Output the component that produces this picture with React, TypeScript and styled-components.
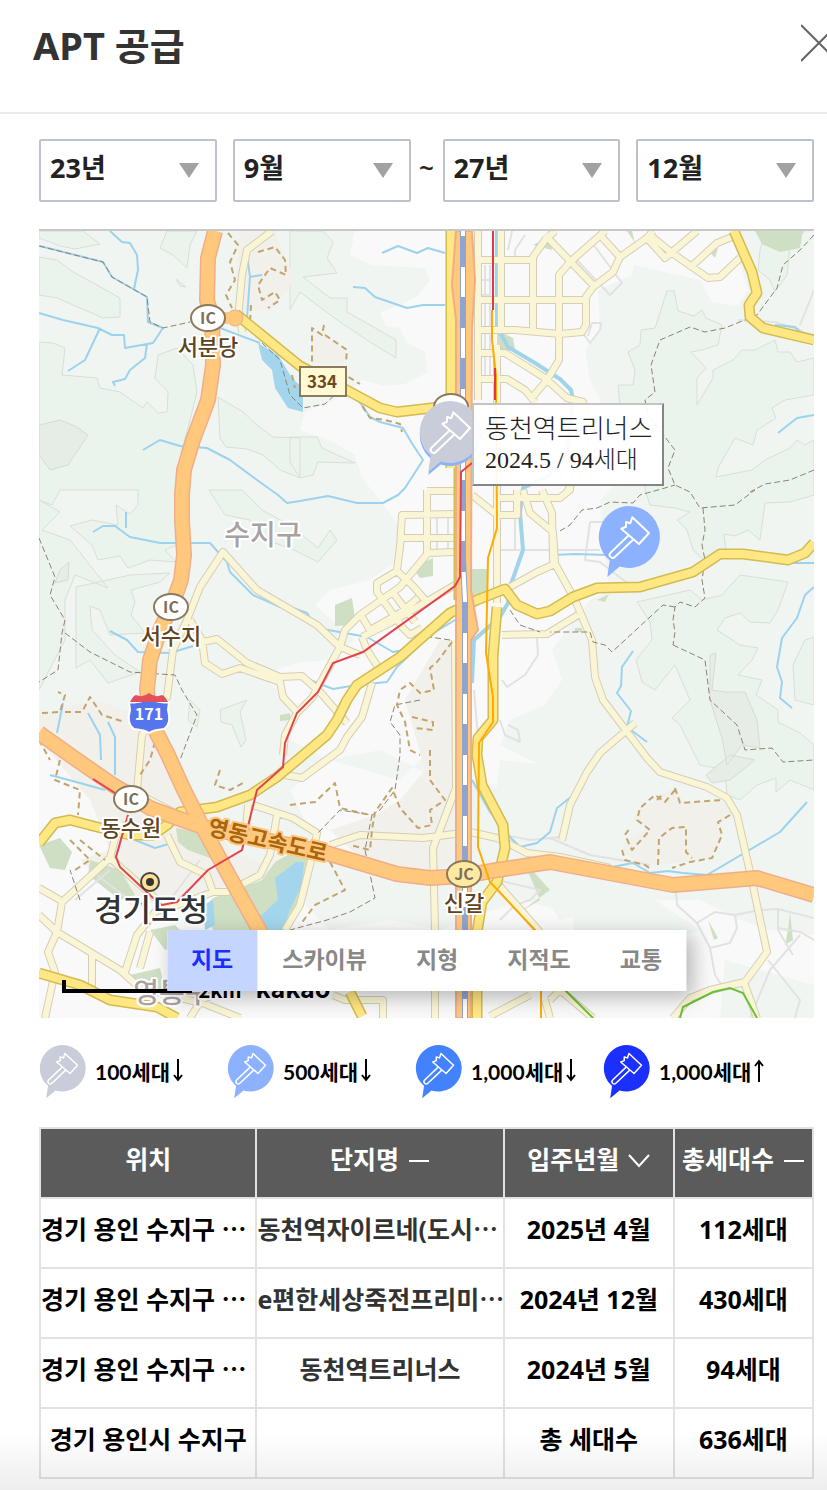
import React, { useState } from "react";
import styled, { createGlobalStyle, css } from "styled-components";

const GlobalStyle = createGlobalStyle`
  *, *::before, *::after { box-sizing: border-box; }
  body {
    margin: 0;
    background: #fff;
    color: #000;
    font-family: "Noto Sans", "Noto Sans CJK KR", sans-serif;
  }
  button, select { font: inherit; color: inherit; }
`;

const Page = styled.div`
  position: relative;
  padding-bottom: 13px;
  overflow: hidden;
`;

const BottomFade = styled.div`
  position: absolute;
  inset: auto 0 0 0;
  height: 60px;
  background: linear-gradient(rgba(0, 0, 0, 0), rgba(0, 0, 0, 0.07));
  pointer-events: none;
`;

const Header = styled.header`
  display: flex;
  align-items: flex-start;
  justify-content: space-between;
  height: 114px;
  padding: 18px 0 0 33px;
  border-bottom: 2px solid #ebebeb;
`;

const Title = styled.h1`
  margin: 0;
  font-size: 38px;
  line-height: 54px;
  font-weight: 700;
  color: #333;
`;

const CloseButton = styled.button`
  flex: none;
  width: 38px;
  height: 38px;
  margin: 6px -12px 0 0;
  padding: 0;
  border: 0;
  background: none;
  svg { display: block; }
`;

const Main = styled.main`
  padding: 25px 13px 0 39px;
`;

const Filters = styled.form`
  display: flex;
  align-items: center;
  margin-bottom: 27px;
`;

const Pair = styled.div`
  flex: 1;
  display: flex;
  gap: 16px;
`;

const Tilde = styled.span`
  width: 32px;
  padding-bottom: 8px;
  text-align: center;
  font-size: 26px;
  line-height: 36px;
  font-weight: 600;
  color: #222;
`;

const SelectBox = styled.label`
  flex: 1;
  position: relative;
  svg {
    position: absolute;
    right: 18px;
    top: 24px;
    pointer-events: none;
  }
`;

const Select = styled.select`
  appearance: none;
  display: block;
  width: 100%;
  height: 63px;
  padding: 0 0 6px 9px;
  border: 2px solid #bdc1cd;
  border-radius: 2px;
  background: #fff;
  font-size: 27px;
  font-weight: 700;
  color: #222;
`;

const MapFrame = styled.section`
  position: relative;
  border-top: 2px solid #c8c8c8;
  > svg { display: block; width: 100%; height: auto; }
`;

const Marker = styled.button`
  position: absolute;
  padding: 0;
  border: 0;
  background: none;
  svg { display: block; }
`;

const Tooltip = styled.div`
  position: absolute;
  padding: 9px 10px 8px 11px;
  border: 2px solid;
  border-color: #c4c4c4 #858585 #858585 #c4c4c4;
  background: rgba(255, 255, 255, 0.93);
  font-family: "Liberation Serif", "Noto Sans CJK KR", serif;
  font-size: 26px;
  line-height: 31px;
  font-weight: 300;
  color: #222;
  white-space: nowrap;
`;

const TooltipDetail = styled.div`
  font-size: 24px;
`;

const LayerTabs = styled.nav`
  position: absolute;
  left: 50%;
  bottom: 27px;
  display: flex;
  transform: translateX(-50%);
  background: #fff;
  box-shadow: 6px 6px 20px rgba(0, 0, 0, 0.28);
`;

const LayerTab = styled.button<{ $active: boolean }>`
  height: 61px;
  padding: 0 24px 6px 25px;
  border: 0;
  background: none;
  font-size: 23px;
  font-weight: 700;
  color: #888;
  white-space: nowrap;
  ${(p) => p.$active && css`
    padding: 0 24px 6px;
    background: #c4d6ff;
    color: #1b2eff;
  `}
`;

const Legend = styled.ul`
  display: grid;
  grid-template-columns: repeat(4, minmax(0, 1fr));
  margin: 27px 0 28px;
  padding: 0 23px 0 0;
  list-style: none;
`;

const LegendItem = styled.li`
  display: flex;
  align-items: center;
  gap: 9px;
  font-family: Lato, "Noto Sans CJK KR", sans-serif;
  font-size: 21px;
  line-height: 32px;
  font-weight: 700;
  white-space: nowrap;
  svg { flex: none; }
`;

const LegendText = styled.span`
  display: flex;
  align-items: center;
  gap: 2px;
`;

const Table = styled.table`
  width: 100%;
  table-layout: fixed;
  border-collapse: collapse;
  font-size: 25px;
  line-height: 36px;
  font-weight: 700;
  text-align: center;
`;

const Col = styled.col<{ $share: number }>`
  width: ${(p) => p.$share}%;
`;

const HeadCell = styled.th`
  height: 70px;
  padding: 0 0 8px;
  border: 2px solid #e2e2e2;
  background: #5b5b5b;
  color: #fff;
  white-space: nowrap;
`;

const SortButton = styled.button`
  display: inline-flex;
  align-items: center;
  gap: 9px;
  padding: 0;
  border: 0;
  background: none;
  svg { margin-top: 4px; }
`;

const Cell = styled.td<{ $long?: boolean; $soft?: boolean }>`
  height: 70px;
  padding: 0 0 8px;
  border: 2px solid #e2e2e2;
  overflow: hidden;
  white-space: nowrap;
  text-align: ${(p) => (p.$long ? "left" : "center")};
  ${(p) => p.$soft && css`
    color: #333;
  `}
`;

/* ---------- icons ---------- */

const PIN_GREY = "#c9cdd9";
const PIN_SKY = "#8cb1ff";
const PIN_BLUE = "#4382ff";
const PIN_NAVY = "#1b30ff";

const HammerPin = ({ color, width = 64, height = 72, shadow }: { color: string; width?: number; height?: number; shadow?: string }) => {
  const body = "M31 0a31 31 0 1 1-9.300 60.600L9.300 71l2.400-16.400A31 31 0 0 1 31 0z";
  return (
    <svg width={width} height={height} viewBox="0 0 62 72" aria-hidden="true" overflow="visible">
      {shadow && <path d={body} fill={shadow} transform="translate(0 3)" />}
      <path d={body} fill={color} />
      <g fill="none" stroke="#fff" strokeWidth="2" strokeLinejoin="round">
        <path d="M34.300 11.300 51 27 41 38 23.300 22.700 28 20.800 28 16 32.300 17.200z" />
        <path d="M30.500 29.500 12.600 46.600a3 3 0 0 0 4.200 4.400L35.300 33.500" />
      </g>
    </svg>
  );
};

const CloseIcon = () => (
  <svg width="38" height="38" viewBox="0 0 38 38" aria-hidden="true">
    <path d="M0 1 36 37M36 1 0 37" stroke="#666" strokeWidth="2" />
  </svg>
);

const Caret = () => (
  <svg width="20" height="15" viewBox="0 0 20 15" aria-hidden="true">
    <path d="M0 0h20L10 15z" fill="#a2a2a2" />
  </svg>
);

const ArrowIcon = ({ up }: { up?: boolean }) => (
  <svg width="12" height="26" viewBox="0 0 12 26" aria-hidden="true">
    <path d={up ? "M6 23V2M2 7l4-5 4 5" : "M6 0v21M2 16l4 5 4-5"} fill="none" stroke="#000" strokeWidth="2" />
  </svg>
);

const DashIcon = () => (
  <svg width="22" height="12" viewBox="0 0 22 12" aria-hidden="true">
    <path d="M1 6h20" stroke="#fff" strokeWidth="2" />
  </svg>
);

const ChevronIcon = () => (
  <svg width="22" height="14" viewBox="0 0 22 14" aria-hidden="true">
    <path d="M1 1l10 11L21 1" fill="none" stroke="#fff" strokeWidth="2" />
  </svg>
);

/* ---------- map artwork (viewBox 39 231 775 787) ---------- */

const urban = [
  "M355 231 350 255 372 265 425 268 430 280 418 296 398 306 380 312 386 326 400 328 406 342 425 352 428 372 405 384 385 386 362 380 345 395 330 402 305 412 300 430 330 440 355 455 362 478 380 500 402 530 398 560 370 580 330 590 315 605 355 640 330 660 300 662 260 675 300 710 290 740 330 760 400 780 440 740 470 780 505 790 520 840 560 850 570 800 550 770 530 760 500 745 510 720 545 705 562 680 552 650 590 600 610 590 602 540 600 500 620 480 590 470 600 400 590 380 585 350 600 330 598 290 632 275 634 265 700 280 712 302 738 306 748 290 730 231z",
  "M39 735 39 1018 814 1018 814 935 770 930 740 920 700 900 600 900 560 910 520 900 440 930 390 920 330 930 300 900 230 880 200 820 150 780 100 760z",
  "M290 790 330 760 380 750 420 770 450 800 440 880 400 868 320 850z",
];

const hills = [
  "M39 231 83 231 100 244 75 249 60 246 39 238z",
  "M39 257 57 260 73 272 97 285 120 298 120 317 103 318 57 298 39 295z",
  "M160 248 167 231 197 231 190 245 187 268 173 255z",
  "M176 279 186 287 180 286z",
  "M39 342 53 343 65 348 62 375 97 378 100 388 120 392 143 408 147 402 158 413 167 412 168 392 155 378 158 355 177 348 193 365 197 392 190 420 182 450 180 500 176 545 165 550 176 562 150 560 128 568 120 556 98 560 92 545 70 526 92 520 118 525 116 505 130 514 138 505 138 490 60 490 52 505 39 500z",
  "M218 397 243 412 257 425 273 437 300 438 300 478 280 470 263 455 247 449 226 447 220 438z",
  "M290 231 323 231 333 242 327 258 337 273 303 277 330 298 347 298 347 312 370 325 396 340 396 358 370 342 340 322 317 305 300 292 290 310z",
  "M290 437 317 437 322 448 355 463 318 462 313 475 300 478 290 462z",
  "M209 490 242 490 262 510 290 525 318 548 330 530 337 540 318 562 290 548 265 540 250 520 225 515z",
  "M39 500 60 512 42 530 70 540 108 588 75 575 65 600 65 640 39 690z",
  "M76 587 130 575 170 573 160 582 131 590 135 602 131 615 145 633 110 635 100 610 90 606 92 630 115 655 140 672 108 683 90 660 76 668z",
  "M190 700 200 710 197 727 188 720z M220 710 247 700 240 712 246 740 241 747 232 725 221 722z",
  "M667 291 674 291 678 311 694 316 702 310 706 318 722 325 718 345 702 350 691 352 706 368 697 378 697 405 713 378 713 370 733 360 742 350 755 350 775 340 778 352 790 352 797 362 814 358 814 395 785 400 772 408 776 418 757 430 753 445 735 438 718 468 716 477 752 470 765 460 790 448 797 440 805 445 814 440 814 495 790 502 765 503 762 525 760 540 748 530 735 536 724 534 726 552 706 562 693 550 687 530 677 520 690 512 675 508 650 505 645 490 645 460 630 430 620 405 618 385 633 385 635 370 628 352 640 345 641 330 655 328z",
  "M637 602 690 590 702 600 722 595 740 575 788 582 778 610 770 623 750 622 740 613 725 618 717 630 740 645 758 648 752 660 738 675 762 680 756 695 778 710 778 722 800 733 814 745 814 790 790 780 776 792 776 778 757 785 740 800 727 795 725 770 700 765 680 725 672 718 690 700 675 665 655 690 642 682 636 660 652 640 650 622z",
  "M760 250 765 231 805 231 790 245 787 275 775 292 770 280 758 270z",
  "M793 665 805 640 814 637 814 705 795 700z",
];

const darkHills = [
  "M39 425 60 420 75 426 88 435 68 465 50 470 39 455z",
  "M60 570 69 562 68 580 55 583z",
  "M710 655 716 653 712 690 725 692 745 692 757 720 760 748 742 745 727 765 722 738 710 700z",
  "M706 775 730 755 755 760 730 780 712 783z",
];

const tanAreas = [
  "M240 231 275 231 295 280 270 310 245 310 236 280z",
  "M312 330 325 332 345 352 347 362 325 365 312 362z",
  "M39 715 70 706 95 700 130 712 160 740 200 800 230 850 300 880 250 880 180 900 130 905 80 860 110 850 90 800 39 740z",
  "M455 640 455 860 430 875 400 868 360 858 330 830 375 815 400 800 425 770 405 700 440 640z",
  "M675 788 685 803 720 800 735 815 718 825 722 840 712 858 690 862 640 865 622 850 628 838 650 828 633 820 640 808 655 802 660 795z",
];

const greens = [
  "M213 898 262 880 275 862 300 848 312 858 302 900 286 932 215 932 200 912z",
  "M176 828 215 835 215 860 188 850 178 842z",
  "M90 860 120 870 135 895 120 900 88 875z M39 845 60 838 72 852 65 870 50 868z",
  "M150 930 175 925 190 940 165 950z M130 975 160 968 165 990 140 992z",
  "M472 569 487 569 487 600 472 600z",
  "M412 568 433 558 433 576 420 578z M335 605 352 598 356 625 335 626z",
  "M497 330 513 338 515 350 497 352z",
  "M755 231 803 231 800 248 780 252 762 244z",
  "M533 245 550 236 552 250z M627 231 635 243 632 231z M708 250 718 248 715 258z",
  "M523 860 550 890 520 912 540 900z M708 920 718 938 714 940z M790 913 793 940 785 945 788 930z",
  "M597 600 609 594 605 602z M575 628 582 628 582 632 575 632z M280 715 290 713 290 720 280 721z",
];

const lakes = [
  "M258 343 278 355 292 378 303 388 303 412 288 408 275 388 272 370 262 360z",
  "M275 878 296 862 304 862 302 885 290 910 282 932 262 932 258 918 278 900z",
  "M203 905 213 900 215 925 205 930z",
];

const streams = [
  "M110 231 122 242 130 243 137 255 138 270 134 289",
  "M40 246 103 262 112 277 147 297 148 322 163 328 153 343 125 348 124 335 112 335 98 328 63 320 39 313",
  "M100 328 85 360 68 371",
  "M147 344 145 358 130 370 125 379 113 382 115 386",
  "M143 450 160 440 180 446 207 448 230 460 257 480 278 495 287 503 300 501 328 496 357 503 383 503 398 495 405 488 423 460 413 445 403 428 380 422 370 417 357 398",
  "M247 255 250 277 247 318 M250 277 262 275",
  "M220 328 260 343",
  "M382 253 398 246 417 253 428 248 445 253 M353 287 365 288 375 297 407 308 423 305 445 305",
  "M293 608 307 613 317 628 367 637 393 652 415 648 427 637 455 620",
  "M310 680 333 689 357 685 387 682 397 667 420 645",
  "M93 532 103 526 115 526 130 537 160 543 210 543 227 562 230 572 253 595 280 607 M126 512 126 528",
  "M110 631 127 640 138 652 170 653 193 646",
  "M63 703 57 733 M88 713 100 735 101 760 M108 722 115 737 115 775 M50 775 80 783 105 790",
  "M633 651 622 667 621 686 617 693 631 711 627 727 647 742",
  "M814 587 805 595 797 618 782 638 777 667 782 682 780 698 792 708",
  "M553 555 575 554 607 555 M792 563 814 563",
  "M612 867 633 863 650 873 668 871 683 873 707 875 780 832 807 802",
  "M600 755 592 770 571 797 557 808 550 832 537 843 520 847 510 837 490 812 472 780",
  "M814 415 797 418 778 433 M775 325 795 327 806 338",
  "M135 840 155 848 172 843 M180 862 205 873",
];

const canals = [
  "M497 231V327L508 347 535 363 560 379 571 390 573 400 567 452 550 475 523 488 520 513 523 550 510 587 508 603 500 617 474 640 472 683",
];

const greyRoads = [
  "M512 231 508 250 M525 235 515 250 515 262 M485 265V375 M490 265V375 M480 280H490 M480 295H490",
  "M437 515V552 M448 515V552 M515 495V550 M500 550H600 M590 522H608 M590 522 585 560 600 562 630 585",
  "M738 320 775 322 800 330 814 340 M800 325 814 290",
  "M502 680 507 687 525 675 538 655 537 638 M474 690 480 760 M500 720 505 735 520 742 518 730 508 725",
  "M676 890 677 905 697 923 710 948 715 975 725 990 M697 923 715 912 735 915 737 928 730 943 710 948 M735 915 760 910 778 909 814 918 M778 909V930L793 955 M778 928 800 932 814 940 M768 960 800 1000 795 1018 M800 935 770 970 750 1018",
  "M550 838 590 855 620 860 650 865 M505 835 530 840 560 837 M497 880 540 890 530 900 515 905 500 920",
  "M90 870 130 900 M170 900 200 860 M75 900 110 870",
  "M575 258 610 295 622 283 590 240 M582 332 590 343 600 330 601 323 592 323 588 336",
];

const minorRoads = [
  "M272 231 247 250 242 275 239 308 242 332",
  "M137 790 142 735 167 697 173 650 187 620 200 587 223 552 257 590 317 625 340 647 360 655",
  "M190 620 202 640 205 663 222 674 240 668 280 682 283 697 297 712",
  "M203 642 217 639 247 663 280 677 302 676 320 692 347 723",
  "M283 755 285 735 297 713 312 698 340 647 345 630 360 615 400 587 428 553 455 552",
  "M397 570 400 547 402 515 455 514 M402 538H455 M427 490V555 M427 491H455",
  "M397 571 377 583 377 592 403 628 410 635 422 628 M397 571 412 585 427 602",
  "M362 617 370 630 400 613 418 598 M391 590 415 622 M362 637 390 623 455 585 M362 637 367 650 378 667",
  "M372 683 362 717 347 737 340 750 302 778 285 775",
  "M497 345V603 M478 231V400 M501 231V330 M475 260H533 M475 300H585 M475 330H515L560 334 582 332 586 325 586 297 593 287 613 272 620 257 647 238 653 231",
  "M475 353H505L545 378 567 398 583 402 593 445 567 492 560 498H498 M475 379H507L525 390 535 402",
  "M533 330V257L545 240 555 231 M559 300V275L570 262 605 231 M559 300V360L547 380 530 400",
  "M545 235 593 285 M600 235 620 257 M647 238 665 258 697 231 M650 235 672 253 708 278 720 277 740 258 M693 265 717 243 732 237",
  "M472 495 497 515 517 515V490 M523 490 530 513 553 532 555 562 M542 490 552 513 553 560 575 600 592 640 595 677 603 700 647 758 660 772 707 787 727 798 737 815 750 872 767 952 745 982 710 990 690 998 673 1018",
  "M745 985 757 1018 M635 723 600 753 587 772 570 805 562 840",
  "M510 587 537 572 557 563 M502 635 547 634 578 615 M570 480 570 490 560 498",
  "M110 858 62 902 57 932 48 952 55 972 45 1018 M39 888 60 900 M39 915 57 932 120 970 140 988 197 1002 235 985",
  "M110 858 155 898 M110 858 120 820 M125 972 137 935 155 912 187 902 213 892 227 892 260 875 270 855 277 815 M150 932 140 968 M92 955V988",
  "M167 835 180 862 207 875 213 892 M253 805 293 818 317 833 310 865 300 905 285 930 M102 775 173 812 M248 805 246 830",
  "M330 845 360 835 423 838 470 832 497 838 527 853 560 857 610 868 M455 640 456 788 433 848 435 928 435 1018",
  "M190 1018 200 1002 240 1018 M333 995 345 1000 383 1000V1018 M490 1016 530 995 M550 1000 560 990 593 1018 M550 1018 545 1000",
  "M497 883 540 932",
];

const majorRoads = [
  "M236 314 300 366 343 388 380 408 397 412 440 407",
  "M451 231V468",
  "M39 843 55 823 70 820 97 827 130 835 153 835 167 825 180 812 217 807 250 795 277 777 327 735 337 720 347 700 357 685 400 657 450 613 477 600 505 589 517 605 537 614 550 611 573 597 597 588 640 587 693 572 720 554 743 554 788 560 805 553 814 543",
  "M734 231 752 272 757 293 749 305 750 317 763 328 814 340",
  "M497 607 493 657 493 720 478 738 477 755 482 785 503 825 505 848 497 882 482 902 477 932V1018",
  "M39 973 80 985 110 1000 157 1007 177 1018 M350 992 362 1016",
];

const highways = [
  "M215 231 208 258 207 300 212 318 213 365 208 400 193 440 184 470 182 495 182 520 184 555 181 580 172 605 160 630 150 660 147 690 150 720 168 755 183 788 203 828 227 872 262 935",
  "M39 733 77 760 113 785 150 808 177 818 203 827 323 852 397 874 430 878 463 876 497 870 550 862 673 885 757 878 814 895",
];

const boundaries = [
  "M39 246 103 262 112 277 147 297 150 322 163 328 190 322",
  "M262 343 280 360 290 395 303 408 325 404 340 390",
  "M39 538 55 577 50 595 65 620 62 633 58 670 39 682 M65 633 90 652 130 672 175 675 182 690 197 715 180 760",
  "M814 235 800 250 783 265 777 288 757 315 725 328 705 332 690 327 660 340 651 365 655 392 645 400 648 415 675 450 668 468 675 485 690 492 700 508 735 505 755 490 M814 470 790 480 765 484 750 492",
  "M560 531 570 525 582 510 597 508 610 502 633 503 640 495 665 488 675 485",
  "M703 508 705 530 702 545 705 560 702 580 705 598 695 607 680 602 675 607 673 620 675 632 673 645 M673 645 705 660 710 700 737 725 745 750 772 748 783 762 814 760",
  "M675 607 663 605 612 652 605 645 593 642 590 632 550 632 M510 610 520 625 540 632",
  "M450 640 430 637 M420 700 395 705 390 722 400 735 400 755 395 790 380 810 372 815 340 810 318 833",
  "M372 815 365 850 375 898 350 912 327 920 290 930 M150 925 140 900 M80 900 70 870",
];

const tanDashes = [
  "M228 233 238 245 230 262 235 280 226 295 232 308 M258 252 275 247 285 260 286 275 270 268 258 285 262 300 275 292 280 300 268 308 M251 305 250 322",
  "M324 325 322 335 312 328 312 362 M325 335 347 350 346 362 M340 372 360 384",
  "M357 398 370 418 385 420 400 424 402 432",
  "M292 375 295 388",
  "M42 713 60 712 65 695 58 692 M65 712 82 712 90 697 102 715 125 722 M39 740 50 760 M155 742 150 760 140 775",
  "M452 642 437 662 430 668 434 690 420 693 410 683 400 690 397 705 405 722 410 750 420 755 M412 717 433 722 433 730 415 728 M430 750 430 780 445 800 430 810 432 825 418 828 400 808 392 788 375 812 372 830 370 850 350 845",
  "M675 788 680 803 722 800 M675 790 665 802 655 795 640 808 637 820 650 830 632 850 625 835 630 828 M657 800 662 795 M730 815 718 822 722 835 712 858 690 862 672 868 M658 865 659 838 672 828 686 827 686 852 692 858 M622 850 625 860 645 865 652 870",
  "M290 805 315 802 335 783 340 808 370 815 M330 862 345 890 315 905 300 925",
  "M60 760 55 780 80 790 78 815 M220 770 215 785 230 790 245 782 M70 840 90 860 75 870 M80 840 105 860",
];

const ringLabels = [
  { x: 208, y: 318, code: "IC", name: "서분당", fill: "#fff" },
  { x: 171, y: 607, code: "IC", name: "서수지", fill: "#fff" },
  { x: 131, y: 799, code: "IC", name: "동수원", fill: "#fff" },
  { x: 464, y: 874, code: "JC", name: "신갈", fill: "#ffe9a0" },
];

const MapText = styled.text<{ $size: number; $color: string; $halo?: string; $bold?: boolean }>`
  font-family: "Noto Sans CJK KR", sans-serif;
  font-size: ${(p) => p.$size}px;
  font-weight: ${(p) => (p.$bold ? 700 : 500)};
  fill: ${(p) => p.$color};
  stroke: ${(p) => p.$halo ?? "#fff"};
  stroke-width: ${(p) => (p.$halo === "none" ? 0 : 4)}px;
  stroke-linejoin: round;
  paint-order: stroke;
  text-anchor: middle;
`;

const Strokes = ({ paths, color, width, dash }: { paths: string[]; color: string; width: number; dash?: string }) => (
  <path d={paths.join(" ")} fill="none" stroke={color} strokeWidth={width} strokeDasharray={dash} strokeLinejoin="round" />
);

const Fills = ({ paths, color, outline }: { paths: string[]; color: string; outline?: string }) => (
  <path d={paths.join(" ")} fill={color} stroke={outline} />
);

const MapArtwork = () => (
  <svg viewBox="39 231 775 787" role="img" aria-label="경기 용인 수지구 지도">
    <rect x="39" y="231" width="775" height="787" fill="#f0f5f2" />
    <Fills paths={urban} color="#f9f9f9" />
    <path d="M500 760 600 770 640 900 560 920 510 850 495 800z M570 900 640 890 700 930 640 950 575 935z M725 960 814 985 814 1018 720 1018z" fill="#f0f5f2" />
    <Fills paths={hills} color="#ebf3ed" outline="#d8dfd6" />
    <Fills paths={darkHills} color="#e6ede6" outline="#d5dcd3" />
    <Fills paths={tanAreas} color="#f1f0ea" />
    <Fills paths={greens} color="#cfdfc3" />
    <Fills paths={lakes} color="#a3d6ec" />
    <Strokes paths={greyRoads} color="#e2e2e2" width={2} />
    <Strokes paths={streams} color="#9bd3ef" width={2} />
    <Strokes paths={canals} color="#a0d4ea" width={4} />
    <Strokes paths={minorRoads} color="#d4ceb8" width={8} />
    <Strokes paths={minorRoads} color="#faf6d5" width={6} />
    <Strokes paths={boundaries} color="#8f826f" width={1} dash="6 3" />
    <Strokes paths={tanDashes} color="#c3a46c" width={2} dash="6 4" />
    <Strokes paths={majorRoads} color="#d2bb52" width={11} />
    <Strokes paths={majorRoads} color="#ffe783" width={8} />
    <path d="M455 468V600" stroke="#d2bb52" strokeWidth="3" />
    <Strokes paths={highways} color="#f0ae88" width={16} />
    <Strokes paths={highways} color="#ffc87c" width={13} />
    <circle cx="235" cy="318" r="8" fill="#ffc87c" stroke="#f0ae88" />
    <path d="M220 318h16" stroke="#ffc87c" strokeWidth="12" />
    <path d="M456 231 452 285 456 320V1018H471V640L478 630 471 590 472 330 475 280 472 231z" fill="#ffc87c" stroke="#f0ae88" strokeWidth="2" />
    <path d="M463 231V560L465 600V1018" fill="none" stroke="#8fa5cf" strokeWidth="6" />
    <path d="M463 206V560L465 600V1018" fill="none" stroke="#fff" strokeWidth="4" strokeDasharray="30 31" />
    <path d="M492 310V340L496 375 497 528 488 558 486 653 493 697 493 722 479 743 478 847 490 882 535 930 541 992V1018" fill="none" stroke="#ffab00" strokeWidth="2" />
    <path d="M493 231V310M495 368V400" stroke="#e23744" strokeWidth="2" />
    <path d="M472 463 461 472 460 577 455 586 363 652 333 663 318 692 297 713 285 743 283 767 257 790 242 850 208 870 177 902 162 905 152 897 120 867 116 857 128 815M93 779 115 793" fill="none" stroke="#e2434f" strokeWidth="2" />
    <path d="M757 1018 743 993 730 988 713 992 683 1007 680 1018M555 990H565L593 1018" fill="none" stroke="#6cc03a" strokeWidth="2" />

    <ellipse cx="451" cy="407" rx="17" ry="13" fill="#fff" stroke="#8c7a5c" strokeWidth="2" />
    {ringLabels.map((l) => (
      <g key={l.name}>
        <ellipse cx={l.x} cy={l.y} rx="17" ry="13" fill={l.fill} stroke="#8c7a5c" strokeWidth="2" />
        <MapText x={l.x} y={l.y + 6} $size={16} $color="#7d7058" $halo="none" $bold>{l.code}</MapText>
        <MapText x={l.x} y={l.y + 37} $size={22} $color="#5e4423">{l.name}</MapText>
      </g>
    ))}

    <rect x="300" y="367" width="46" height="29" fill="#fff9d4" stroke="#8c7a5c" strokeWidth="2" />
    <MapText x="322" y="388" $size={17} $color="#6b4a22" $halo="none" $bold>334</MapText>

    <path d="M129 702q10 2 20-4 10 6 20 4l-1 8q4 14-4 19-11 1-15 4-4-3-15-4-8-5-4-19z" fill="#5575ee" stroke="#fff" strokeWidth="2" />
    <path d="M130 702q3-6 6-7 7 3 13-2 6 5 13 2 3 1 6 7z" fill="#e2505c" />
    <MapText x="149" y="720" $size={16} $color="#fff" $halo="none" $bold>171</MapText>

    <MapText x="263" y="545" $size={28} $color="#aaa2a2">수지구</MapText>
    <MapText x="172" y="1003" $size={28} $color="#aaa2a2">영통구</MapText>
    <MapText x="0" y="0" transform="translate(266 848) rotate(13)" $size={22} $color="#a9650f" $halo="#ffc87c" $bold>영동고속도로</MapText>
    <circle cx="150" cy="882" r="9" fill="#ffdf93" stroke="#444" strokeWidth="2" />
    <circle cx="150" cy="882" r="4" fill="#333" />
    <MapText x="151" y="921" $size={31} $color="#333">경기도청</MapText>

    <path d="M64 980V991H192" fill="none" stroke="#000" strokeWidth="4" />
    <MapText x="220" y="998" $size={20} $color="#000" $bold>2km</MapText>
    <MapText x="293" y="998" $size={25} $color="#000" $bold>kakao</MapText>
  </svg>
);

/* position of an overlay on the map, in the artwork's units */
const at = (x: number, y: number) => ({ left: `${(x / 775) * 100}%`, top: `${(y / 787) * 100}%` });

const layers = ["지도", "스카이뷰", "지형", "지적도", "교통"];

const legend = [
  { color: PIN_GREY, label: "100세대", up: false },
  { color: PIN_SKY, label: "500세대", up: false },
  { color: PIN_BLUE, label: "1,000세대", up: false },
  { color: PIN_NAVY, label: "1,000세대", up: true },
];

const rows = [
  { place: "경기 용인 수지구 ⋯", name: "동천역자이르네(도시⋯", date: "2025년 4월", count: "112세대" },
  { place: "경기 용인 수지구 ⋯", name: "e편한세상죽전프리미⋯", date: "2024년 12월", count: "430세대" },
  { place: "경기 용인 수지구 ⋯", name: "동천역트리너스", date: "2024년 5월", count: "94세대" },
];

const years = ["23년", "24년", "25년", "26년", "27년"];
const months = Array.from({ length: 12 }, (_, i) => `${i + 1}월`);

const Dropdown = ({ name, options, initial }: { name: string; options: string[]; initial: string }) => (
  <SelectBox>
    <Select aria-label={name} defaultValue={initial}>
      {options.map((o) => (
        <option key={o}>{o}</option>
      ))}
    </Select>
    <Caret />
  </SelectBox>
);

export default function App() {
  const [layer, setLayer] = useState("지도");

  return (
    <>
      <GlobalStyle />
      <Page>
        <Header>
          <Title>APT 공급</Title>
          <CloseButton type="button" aria-label="닫기">
            <CloseIcon />
          </CloseButton>
        </Header>
        <Main>
          <Filters>
            <Pair>
              <Dropdown name="시작 연도" options={years} initial="23년" />
              <Dropdown name="시작 월" options={months} initial="9월" />
            </Pair>
            <Tilde>~</Tilde>
            <Pair>
              <Dropdown name="종료 연도" options={years} initial="27년" />
              <Dropdown name="종료 월" options={months} initial="12월" />
            </Pair>
          </Filters>

          <MapFrame>
            <MapArtwork />
            <Marker type="button" aria-label="동천역트리너스" style={at(379, 170)}>
              <HammerPin color={PIN_GREY} shadow={PIN_SKY} />
            </Marker>
            <Marker type="button" aria-label="동천역자이르네" style={at(558, 275)}>
              <HammerPin color={PIN_SKY} />
            </Marker>
            <Tooltip style={at(433, 172)}>
              동천역트리너스
              <TooltipDetail>2024.5 / 94세대</TooltipDetail>
            </Tooltip>
            <LayerTabs>
              {layers.map((l) => (
                <LayerTab key={l} type="button" $active={l === layer} onClick={() => setLayer(l)}>
                  {l}
                </LayerTab>
              ))}
            </LayerTabs>
          </MapFrame>

          <Legend>
            {legend.map((item) => (
              <LegendItem key={item.color}>
                <HammerPin color={item.color} width={47} height={54} />
                <LegendText>
                  {item.label}
                  <ArrowIcon up={item.up} />
                </LegendText>
              </LegendItem>
            ))}
          </Legend>

          <Table>
            <colgroup>
              <Col $share={28} />
              <Col $share={32} />
              <Col $share={22} />
              <Col $share={18} />
            </colgroup>
            <thead>
              <tr>
                <HeadCell scope="col">위치</HeadCell>
                <HeadCell scope="col"><SortButton type="button">단지명 <DashIcon /></SortButton></HeadCell>
                <HeadCell scope="col"><SortButton type="button">입주년월 <ChevronIcon /></SortButton></HeadCell>
                <HeadCell scope="col"><SortButton type="button">총세대수 <DashIcon /></SortButton></HeadCell>
              </tr>
            </thead>
            <tbody>
              {rows.map((r) => (
                <tr key={r.name}>
                  <Cell $long>{r.place}</Cell>
                  <Cell $long={r.name.endsWith("⋯")} $soft>{r.name}</Cell>
                  <Cell>{r.date}</Cell>
                  <Cell>{r.count}</Cell>
                </tr>
              ))}
              <tr>
                <Cell>경기 용인시 수지구</Cell>
                <Cell />
                <Cell>총 세대수</Cell>
                <Cell>636세대</Cell>
              </tr>
            </tbody>
          </Table>
        </Main>
        <BottomFade />
      </Page>
    </>
  );
}
